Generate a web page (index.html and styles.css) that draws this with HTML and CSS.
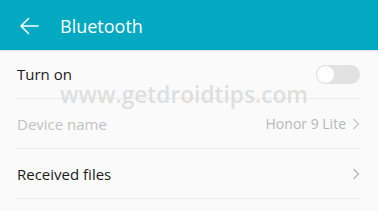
FILE: index.html
```html
<!DOCTYPE html>
<html>
<head>
<meta charset="utf-8">
<link rel="stylesheet" href="styles.css">
</head>
<body>
<div class="screen">
  <header class="appbar">
    <svg class="back" width="20" height="18" viewBox="0 0 20 18">
      <path d="M19 9H2M9.5 1.5L2 9l7.5 7.5" fill="none" stroke="#fff" stroke-width="1.6" stroke-linecap="round" stroke-linejoin="round"/>
    </svg>
    <span class="title">Bluetooth</span>
  </header>
  <div class="list">
    <div class="row">
      <span class="label">Turn on</span>
      <span class="switch"><span class="knob"></span></span>
    </div>
    <div class="row">
      <span class="label disabled">Device name</span>
      <span class="value">Honor 9 Lite
        <svg class="chev" width="8" height="12" viewBox="0 0 8 12"><path d="M1.5 1l5 5-5 5" fill="none" stroke="#c8c8c8" stroke-width="1.4"/></svg>
      </span>
    </div>
    <div class="row">
      <span class="label">Received files</span>
      <svg class="chev" width="8" height="12" viewBox="0 0 8 12"><path d="M1.5 1l5 5-5 5" fill="none" stroke="#b8b8b8" stroke-width="1.4"/></svg>
    </div>
  </div>
  <div class="watermark">www.getdroidtips.com</div>
</div>
</body>
</html>
```
FILE: styles.css
```css
html, body {
  margin: 0;
  padding: 0;
  background: #fafafa;
}
.screen {
  position: relative;
  width: 378px;
  height: 211px;
  overflow: hidden;
  font-family: "Open Sans", "Noto Sans", sans-serif;
  background: #fafafa;
}
.appbar {
  height: 50px;
  background: #03a9c1;
  display: flex;
  align-items: center;
  box-shadow: 0 1px 1px rgba(0,0,0,0.08);
}
.back {
  margin-left: 19px;
  margin-right: 21px;
  margin-top: 2px;
}
.title {
  color: #fff;
  font-size: 18px;
  margin-top: 1px;
}
.list {
  margin: 0 18px 0 16px;
}
.row {
  height: 48px;
  border-bottom: 1px solid #ebebeb;
  display: flex;
  align-items: center;
  justify-content: space-between;
}
.row + .row { height: 49px; }
.label {
  font-size: 15px;
  color: #1a1a1a;
  padding-left: 1px;
}
.label.disabled { color: #c2c2c2; }
.value {
  font-size: 14px;
  color: #b8b8b8;
  display: flex;
  align-items: center;
  gap: 6px;
}
.switch {
  width: 44px;
  height: 19px;
  border-radius: 10px;
  background: #e2e2e2;
  position: relative;
}
.knob {
  position: absolute;
  left: 0;
  top: 0;
  width: 17px;
  height: 17px;
  border-radius: 50%;
  background: #fff;
  border: 1px solid #e0e0e0;
}
.watermark {
  position: absolute;
  left: 60px;
  top: 79px;
  font-family: "Open Sans", sans-serif;
  font-weight: 600;
  font-size: 22.7px;
  color: rgba(205,205,205,0.6);
}
```
